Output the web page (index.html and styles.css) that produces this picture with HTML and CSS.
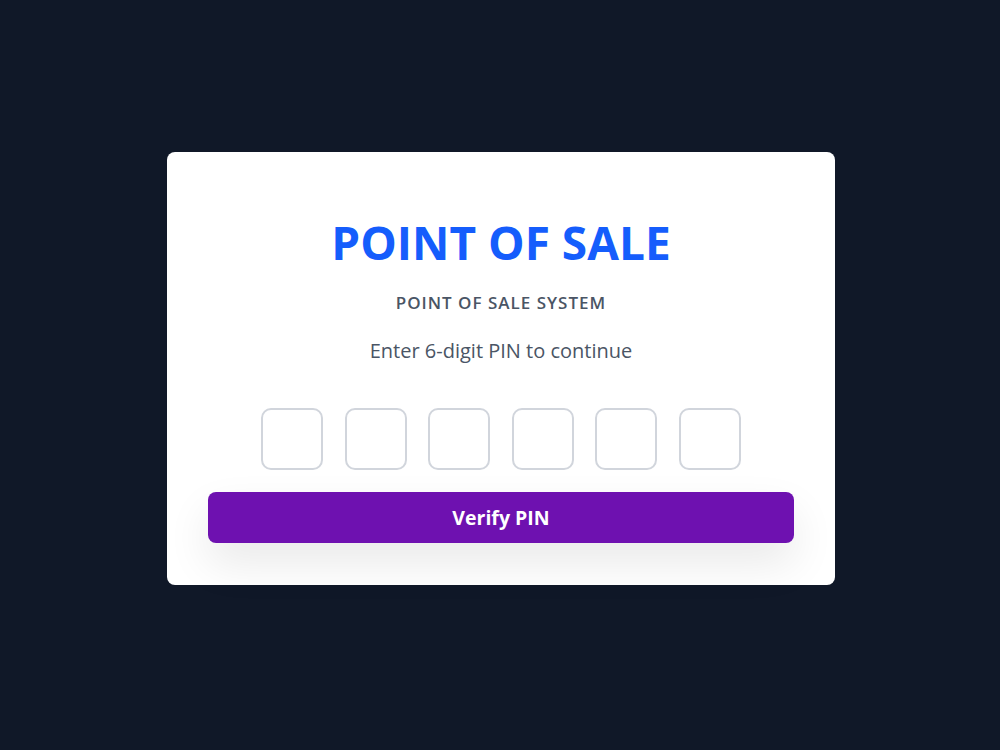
FILE: index.html
```html
<!DOCTYPE html>
<html lang="en">
<head>
<meta charset="utf-8">
<title>Point of Sale</title>
<link rel="stylesheet" href="styles.css">
</head>
<body>
<main class="page">
  <section class="card">
    <h1 class="title">POINT OF SALE</h1>
    <p class="subtitle">POINT OF SALE SYSTEM</p>
    <p class="prompt">Enter 6-digit PIN to continue</p>
    <div class="pin-row">
      <input class="pin-box" type="password" maxlength="1" inputmode="numeric">
      <input class="pin-box" type="password" maxlength="1" inputmode="numeric">
      <input class="pin-box" type="password" maxlength="1" inputmode="numeric">
      <input class="pin-box" type="password" maxlength="1" inputmode="numeric">
      <input class="pin-box" type="password" maxlength="1" inputmode="numeric">
      <input class="pin-box" type="password" maxlength="1" inputmode="numeric">
    </div>
    <button class="verify-btn" type="button">Verify PIN</button>
  </section>
</main>
</body>
</html>
```

FILE: styles.css
```css
* { box-sizing: border-box; }

html, body {
  margin: 0;
  height: 100%;
}

body {
  background: #101828;
  font-family: "Open Sans", "Noto Sans", sans-serif;
}

.page {
  display: flex;
  justify-content: center;
  align-items: flex-start;
  padding-top: 152px;
  padding-left: 2px;
}

.card {
  width: 668px;
  background: #ffffff;
  border-radius: 8px;
  padding: 66px 41px 42px;
  display: flex;
  flex-direction: column;
  align-items: center;
}

.title {
  margin: 0;
  font-size: 46px;
  line-height: 48px;
  font-weight: 700;
  color: #155dfc;
}

.subtitle {
  margin: 25px 0 0;
  font-size: 17px;
  line-height: 24px;
  font-weight: 600;
  letter-spacing: 1px;
  color: #4a5565;
}

.prompt {
  margin: 22px 0 0;
  font-size: 20px;
  line-height: 28px;
  color: #4a5565;
}

.pin-row {
  display: flex;
  gap: 21.5px;
  margin-top: 43px;
}

.pin-box {
  width: 62px;
  height: 62px;
  border: 2px solid #d1d5dc;
  border-radius: 10px;
  background: #ffffff;
  font: inherit;
  font-size: 24px;
  text-align: center;
  outline: none;
}

.verify-btn {
  margin-top: 22px;
  width: 100%;
  height: 51px;
  border: none;
  border-radius: 8px;
  background: #6e11b0;
  color: #ffffff;
  font: inherit;
  font-size: 19.5px;
  font-weight: 700;
  box-shadow: 0 20px 44px rgba(0, 0, 0, 0.09);
  cursor: pointer;
}
```
